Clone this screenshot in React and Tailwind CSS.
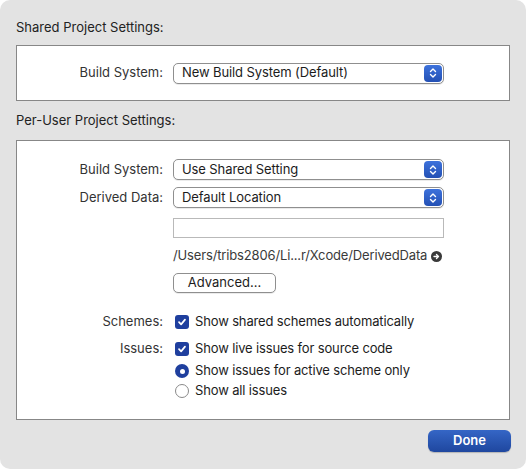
import React from "react";

const font = { fontFamily: "Inter, 'Liberation Sans', Arial, sans-serif" };

function Stepper() {
  return (
    <div className="absolute right-[1px] top-[1px] bottom-[1px] w-[18px] rounded-[4px] bg-gradient-to-b from-[#3d72dc] to-[#2350b4] flex items-center justify-center">
      <svg width="8" height="12" viewBox="0 0 8 12" fill="none">
        <path d="M1.5 4.5 L4 2 L6.5 4.5" stroke="white" strokeWidth="1.4" strokeLinecap="round" strokeLinejoin="round" />
        <path d="M1.5 7.5 L4 10 L6.5 7.5" stroke="white" strokeWidth="1.4" strokeLinecap="round" strokeLinejoin="round" />
      </svg>
    </div>
  );
}

function Select({ value }) {
  return (
    <div className="relative w-[271px] h-[21px] bg-white border border-[#8f8f8f] rounded-[5px] shadow-[0_1px_0_rgba(0,0,0,0.08)] flex items-center pl-[8px] text-[13px] text-[#1c1c1c] tracking-[-0.1px]">
      {value}
      <Stepper />
    </div>
  );
}

function Row({ label, children, className = "" }) {
  return (
    <div className={"flex items-center " + className}>
      <div className="w-[146px] text-right text-[13px] text-[#333]">{label}</div>
      <div className="ml-[10px]">{children}</div>
    </div>
  );
}

function Checkbox() {
  return (
    <div className="w-[14px] h-[14px] rounded-[3px] bg-[#1f3f9e] flex items-center justify-center">
      <svg width="10" height="10" viewBox="0 0 10 10" fill="none">
        <path d="M2 5.2 L4.1 7.4 L8 2.6" stroke="white" strokeWidth="1.7" strokeLinecap="round" strokeLinejoin="round" />
      </svg>
    </div>
  );
}

function Radio({ on }) {
  return on ? (
    <div className="w-[14px] h-[14px] rounded-full bg-[#1f3f9e] flex items-center justify-center">
      <div className="w-[5px] h-[5px] rounded-full bg-white" />
    </div>
  ) : (
    <div className="w-[14px] h-[14px] rounded-full bg-white border border-[#8a8a8a]" />
  );
}

function Option({ control, text }) {
  return (
    <div className="flex items-center ml-[2px]">
      {control}
      <span className="ml-[6px] text-[13px] text-[#1c1c1c] tracking-[-0.15px]">{text}</span>
    </div>
  );
}

export default function App() {
  return (
    <div className="w-[526px] h-[469px] bg-white" style={font}>
      <div className="w-[526px] h-[469px] bg-[#e3e3e3] rounded-[10px] px-[16px] pt-[19px] flex flex-col">
        <div className="h-[16px] leading-[16px] text-[13px] text-[#222]">Shared Project Settings:</div>
        <div className="mt-[10px] h-[56px] bg-white border border-[#878787] flex items-center">
          <Row label="Build System:">
            <Select value="New Build System (Default)" />
          </Row>
        </div>
        <div className="mt-[11px] h-[16px] leading-[16px] text-[13px] text-[#222]">Per-User Project Settings:</div>
        <div className="mt-[12px] h-[280px] bg-white border border-[#878787] pt-[18px] flex flex-col">
          <Row label="Build System:">
            <Select value="Use Shared Setting" />
          </Row>
          <Row label="Derived Data:" className="mt-[7px]">
            <Select value="Default Location" />
          </Row>
          <Row label="" className="mt-[10px]">
            <div className="w-[271px] h-[20px] bg-white border border-[#b9b9b9]" />
          </Row>
          <Row label="" className="mt-[10px]">
            <div className="h-[16px] flex items-center text-[13px] text-[#3a3a3a] tracking-[-0.15px]">
              /Users/tribs2806/Li...r/Xcode/DerivedData
              <span className="ml-[4px] w-[11px] h-[11px] rounded-full bg-[#3a3a3a] flex items-center justify-center">
                <svg width="7" height="7" viewBox="0 0 7 7" fill="none">
                  <path d="M1 3.5 H5.5 M3.5 1.5 L5.5 3.5 L3.5 5.5" stroke="white" strokeWidth="1.3" strokeLinecap="round" strokeLinejoin="round" />
                </svg>
              </span>
            </div>
          </Row>
          <Row label="" className="mt-[9px]">
            <div className="w-[103px] h-[20px] bg-white border border-[#8f8f8f] rounded-[5px] shadow-[0_1px_0_rgba(0,0,0,0.08)] flex items-center justify-center text-[13px] text-[#1c1c1c]">
              Advanced...
            </div>
          </Row>
          <Row label="Schemes:" className="mt-[20px] h-[18px]">
            <Option control={<Checkbox />} text="Show shared schemes automatically" />
          </Row>
          <Row label="Issues:" className="mt-[9px] h-[18px]">
            <Option control={<Checkbox />} text="Show live issues for source code" />
          </Row>
          <Row label="" className="mt-[4px] h-[18px]">
            <Option control={<Radio on />} text="Show issues for active scheme only" />
          </Row>
          <Row label="" className="mt-[2px] h-[18px]">
            <Option control={<Radio />} text="Show all issues" />
          </Row>
        </div>
        <div className="mt-[10px] flex justify-end">
          <div className="w-[83px] h-[22px] rounded-[6px] bg-gradient-to-b from-[#3566c6] to-[#1f479f] shadow-[0_1px_1px_rgba(0,0,0,0.2)] flex items-center justify-center text-[13px] font-semibold text-white mr-[-1px]">
            Done
          </div>
        </div>
      </div>
    </div>
  );
}
